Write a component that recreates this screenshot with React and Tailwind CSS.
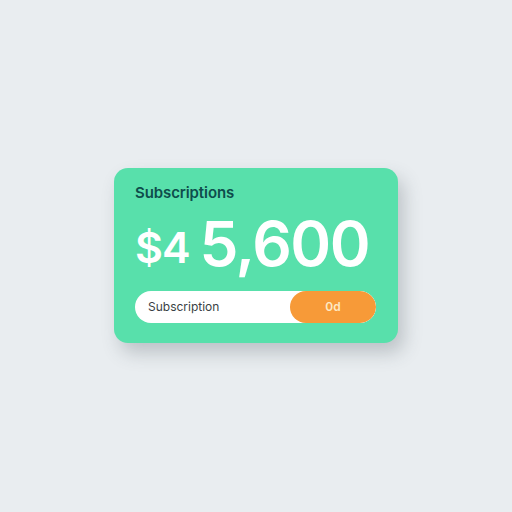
import React from 'react';

const App = () => {
  return (
    <div className="w-[512px] h-[512px] bg-[#e9edf0] flex items-center justify-center" style={{ fontFamily: 'Inter, "Open Sans", sans-serif' }}>
      {/* Subscription total card */}
      <div className="w-[284px] h-[175px] mt-[-2px] rounded-[14px] bg-[#58e0ab] pl-[21px] pr-[21px] pt-[15px] shadow-[6px_10px_18px_rgba(60,70,80,0.25)]">
        <h2 className="text-[15px] leading-[20px] font-semibold text-[#0e4d4c] tracking-[-0.1px]">
          Subscriptions
        </h2>

        <div className="mt-[12px] h-[60px] flex items-end text-white font-semibold leading-none">
          <span className="text-[43px] tracking-[-1px] mb-[6px]">$4</span>
          <span className="ml-[10px] text-[62px] tracking-[-1.5px]">5,600</span>
        </div>

        {/* Plan pill */}
        <div className="mt-[16px] h-[32px] w-[241px] rounded-full bg-white flex items-center overflow-hidden">
          <span className="pl-[13px] flex-1 text-[12px] text-[#3a3f44]">Subscription</span>
          <span className="w-[86px] h-full rounded-full bg-[#f79a38] flex items-center justify-center text-[12px] font-semibold text-[#fde9c4]">
            0d
          </span>
        </div>
      </div>
    </div>
  );
};

export default App;
